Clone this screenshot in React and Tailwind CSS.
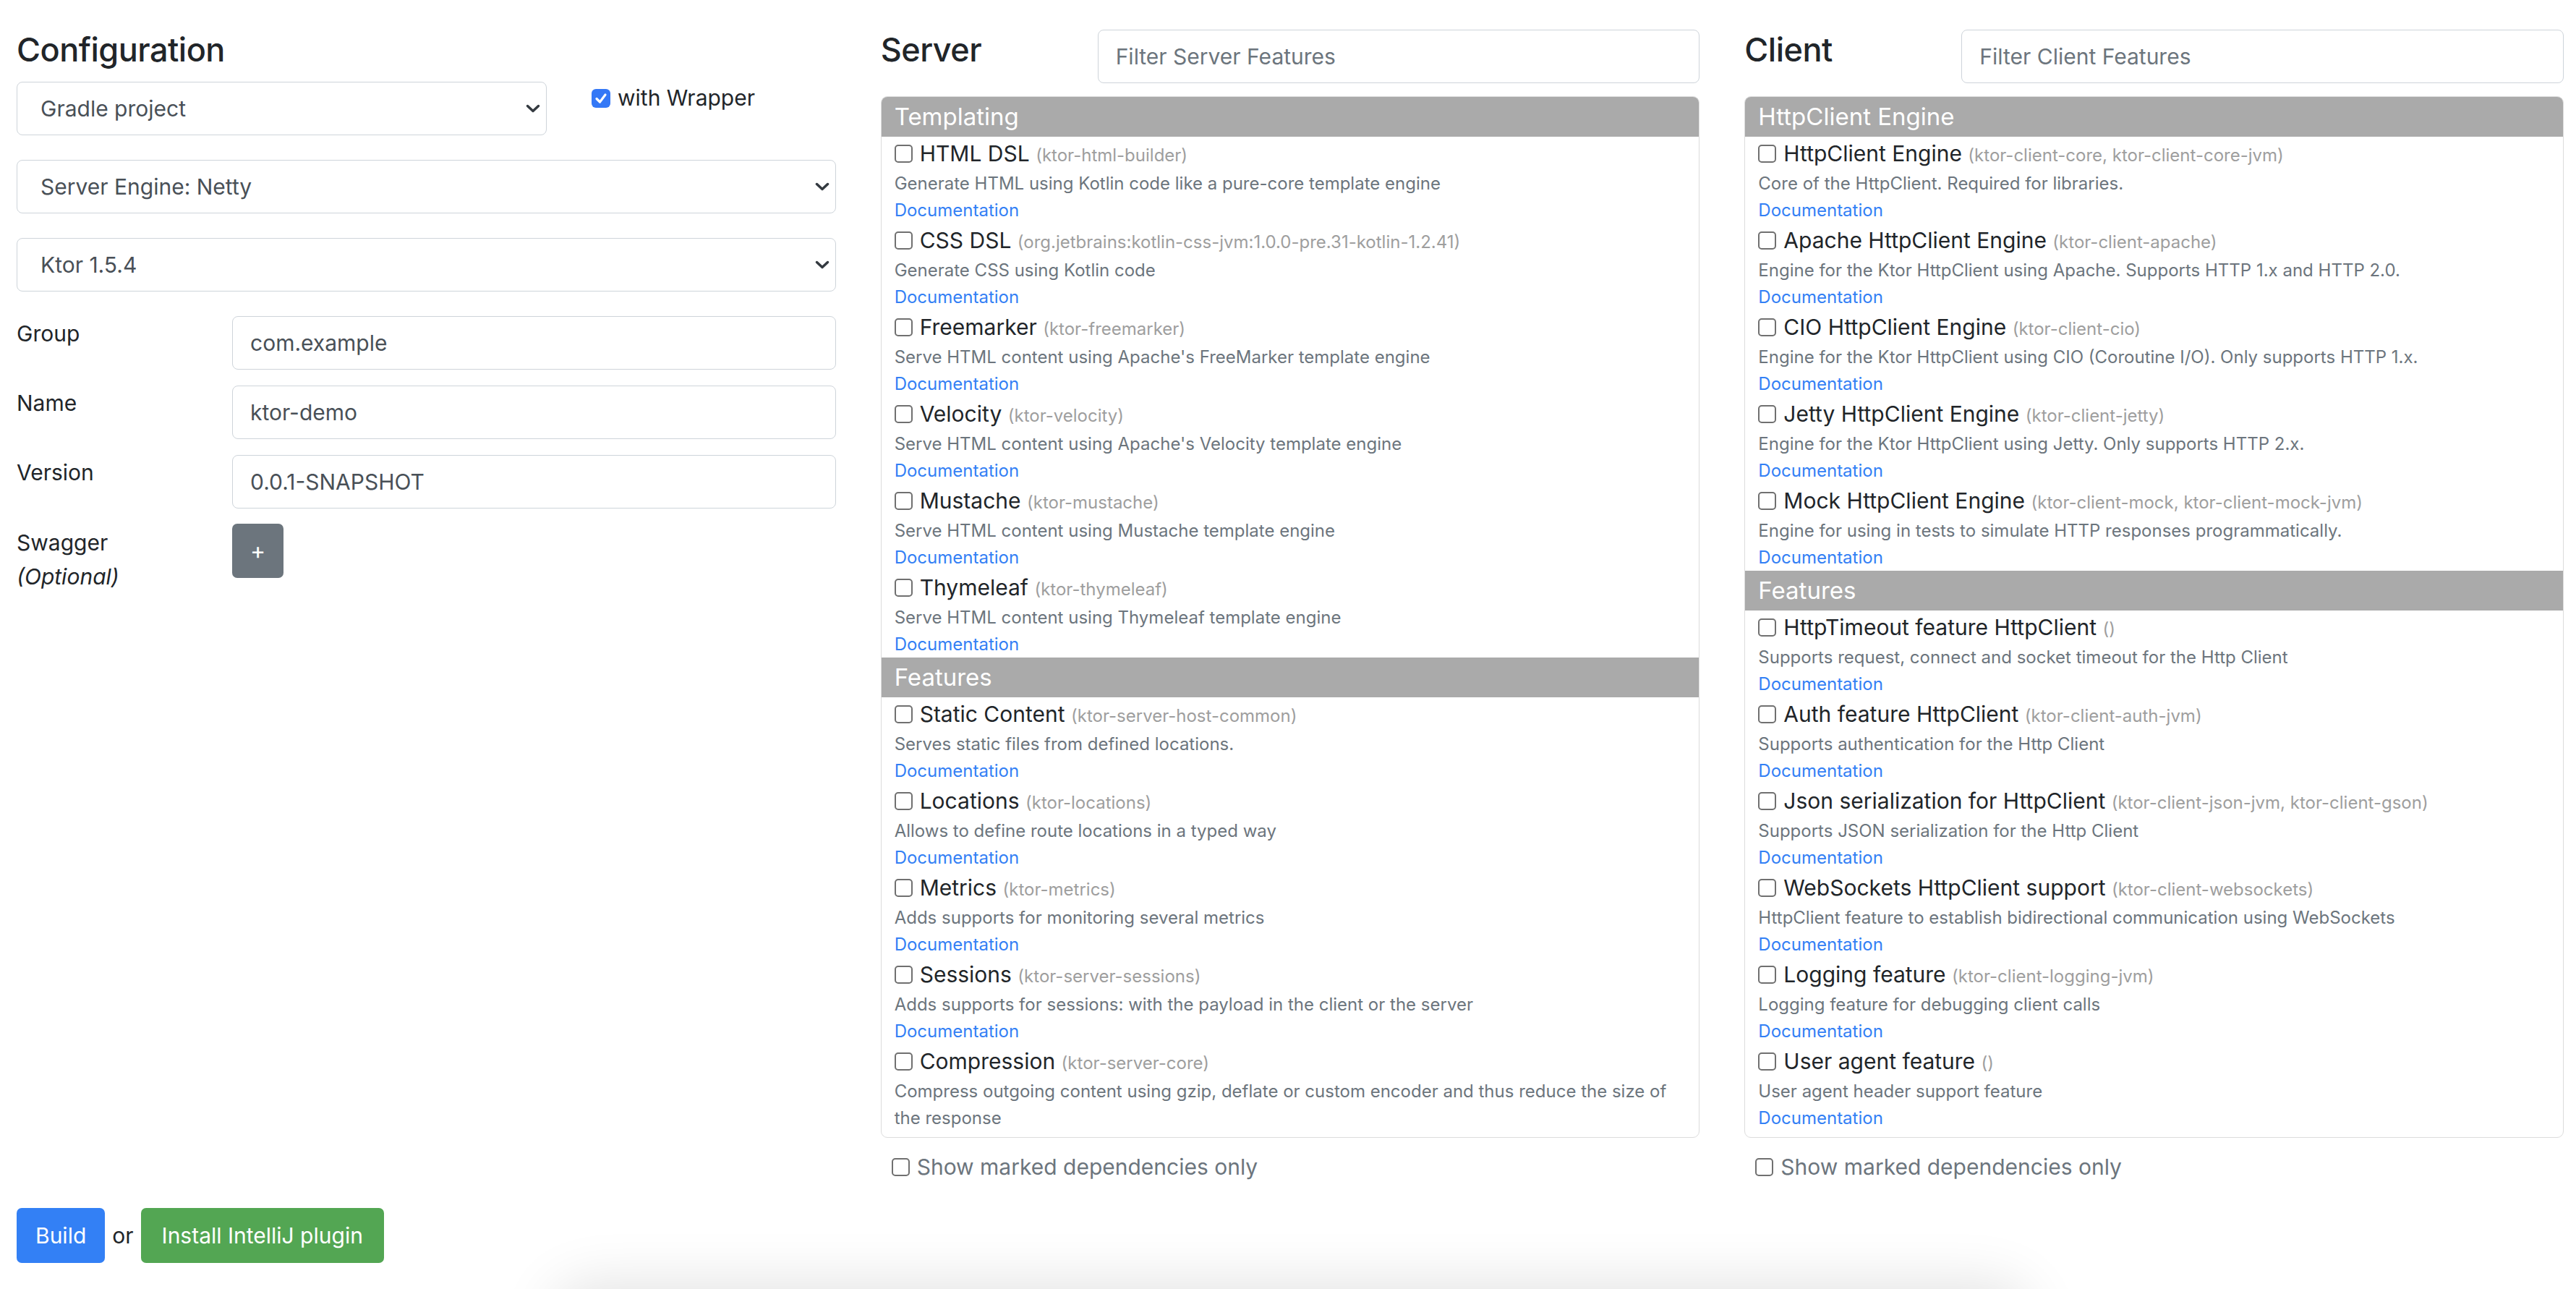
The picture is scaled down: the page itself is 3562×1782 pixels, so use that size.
import React from 'react'

const serverGroups = [
  {
    title: 'Templating',
    items: [
      { name: 'HTML DSL', dep: 'ktor-html-builder', desc: 'Generate HTML using Kotlin code like a pure-core template engine' },
      { name: 'CSS DSL', dep: 'org.jetbrains:kotlin-css-jvm:1.0.0-pre.31-kotlin-1.2.41', desc: 'Generate CSS using Kotlin code' },
      { name: 'Freemarker', dep: 'ktor-freemarker', desc: "Serve HTML content using Apache's FreeMarker template engine" },
      { name: 'Velocity', dep: 'ktor-velocity', desc: "Serve HTML content using Apache's Velocity template engine" },
      { name: 'Mustache', dep: 'ktor-mustache', desc: 'Serve HTML content using Mustache template engine' },
      { name: 'Thymeleaf', dep: 'ktor-thymeleaf', desc: 'Serve HTML content using Thymeleaf template engine' },
    ],
  },
  {
    title: 'Features',
    items: [
      { name: 'Static Content', dep: 'ktor-server-host-common', desc: 'Serves static files from defined locations.' },
      { name: 'Locations', dep: 'ktor-locations', desc: 'Allows to define route locations in a typed way' },
      { name: 'Metrics', dep: 'ktor-metrics', desc: 'Adds supports for monitoring several metrics' },
      { name: 'Sessions', dep: 'ktor-server-sessions', desc: 'Adds supports for sessions: with the payload in the client or the server' },
      { name: 'Compression', dep: 'ktor-server-core', desc: 'Compress outgoing content using gzip, deflate or custom encoder and thus reduce the size of the response' },
    ],
  },
]

const clientGroups = [
  {
    title: 'HttpClient Engine',
    items: [
      { name: 'HttpClient Engine', dep: 'ktor-client-core, ktor-client-core-jvm', desc: 'Core of the HttpClient. Required for libraries.' },
      { name: 'Apache HttpClient Engine', dep: 'ktor-client-apache', desc: 'Engine for the Ktor HttpClient using Apache. Supports HTTP 1.x and HTTP 2.0.' },
      { name: 'CIO HttpClient Engine', dep: 'ktor-client-cio', desc: 'Engine for the Ktor HttpClient using CIO (Coroutine I/O). Only supports HTTP 1.x.' },
      { name: 'Jetty HttpClient Engine', dep: 'ktor-client-jetty', desc: 'Engine for the Ktor HttpClient using Jetty. Only supports HTTP 2.x.' },
      { name: 'Mock HttpClient Engine', dep: 'ktor-client-mock, ktor-client-mock-jvm', desc: 'Engine for using in tests to simulate HTTP responses programmatically.' },
    ],
  },
  {
    title: 'Features',
    items: [
      { name: 'HttpTimeout feature HttpClient', dep: '', desc: 'Supports request, connect and socket timeout for the Http Client' },
      { name: 'Auth feature HttpClient', dep: 'ktor-client-auth-jvm', desc: 'Supports authentication for the Http Client' },
      { name: 'Json serialization for HttpClient', dep: 'ktor-client-json-jvm, ktor-client-gson', desc: 'Supports JSON serialization for the Http Client' },
      { name: 'WebSockets HttpClient support', dep: 'ktor-client-websockets', desc: 'HttpClient feature to establish bidirectional communication using WebSockets' },
      { name: 'Logging feature', dep: 'ktor-client-logging-jvm', desc: 'Logging feature for debugging client calls' },
      { name: 'User agent feature', dep: '', desc: 'User agent header support feature' },
    ],
  },
]

function Box() {
  return <span className="inline-block align-top mt-[11px] w-[25px] h-[25px] border-2 border-[#707070] rounded-[5px] bg-white" />
}

function Chevron() {
  return (
    <svg width="20" height="12" viewBox="0 0 20 12" className="shrink-0">
      <polyline points="2.5,2.5 10,9.5 17.5,2.5" fill="none" stroke="#343a40" strokeWidth="3.5" strokeLinecap="round" strokeLinejoin="round" />
    </svg>
  )
}

function Select({ value, className = '' }) {
  return (
    <div className={`flex items-center justify-between h-[74px] border border-[#ced4da] rounded-[8px] bg-white pl-[32px] pr-[8px] text-[30px] text-[#495057] ${className}`}>
      <span>{value}</span>
      <Chevron />
    </div>
  )
}

function Input({ value, placeholder, className = '' }) {
  return (
    <div className={`flex items-center h-[74px] border border-[#ced4da] rounded-[8px] bg-white pl-[24px] text-[30px] ${className}`}>
      {value ? <span className="text-[#495057]">{value}</span> : <span className="text-[#6c757d]">{placeholder}</span>}
    </div>
  )
}

function Item({ name, dep, desc }) {
  return (
    <div>
      <div className="h-[46px] leading-[46px] text-[30px] text-[#212529] whitespace-nowrap">
        <Box />
        <span className="ml-[10px]">{name}</span>{' '}
        <span className="text-[24px] leading-none text-[#9e9e9e]">({dep})</span>
      </div>
      <div className="leading-[37px] text-[24px] text-[#6c757d]">{desc}</div>
      <div className="leading-[37px] text-[24px] text-[#3380f5]">Documentation</div>
    </div>
  )
}

function FeaturePanel({ title, placeholder, groups }) {
  return (
    <div>
      <div className="flex items-start">
        <h3 className="w-[300px] text-[45px] leading-[56px] font-medium tracking-[-0.5px] text-[#212529]">{title}</h3>
        <Input placeholder={placeholder} className="flex-1" />
      </div>
      <div className="mt-[18px] h-[1440px] border border-[#dcdcdc] rounded-[9px] overflow-hidden">
        {groups.map((g) => (
          <div key={g.title}>
            <div className="h-[55px] bg-[#aaaaaa] px-[18px] text-[33px] leading-[55px] text-white">{g.title}</div>
            <div className="px-[18px]">
              {g.items.map((it) => (
                <Item key={it.name} {...it} />
              ))}
            </div>
          </div>
        ))}
      </div>
      <div className="mt-[17px] pl-[15px] h-[46px] leading-[46px] text-[30px] text-[#6c757d]">
        <Box />
        <span className="ml-[10px]">Show marked dependencies only</span>
      </div>
    </div>
  )
}

function FieldRow({ label, children }) {
  return (
    <div className="flex items-start">
      <div className="w-[298px] mt-[1px] text-[30px] leading-[46px] text-[#212529]">{label}</div>
      <div className="flex-1">{children}</div>
    </div>
  )
}

export default function App() {
  return (
    <div className="relative h-[1782px] overflow-hidden bg-white font-['Inter',sans-serif]">
      <div className="grid grid-cols-3 gap-x-[62px] pl-[23px] pr-[17px] pt-[41px]">
        {/* Configuration */}
        <div>
          <h3 className="text-[45px] leading-[56px] font-medium tracking-[-0.5px] text-[#212529]">Configuration</h3>
          <div className="mt-[16px] flex items-start">
            <Select value="Gradle project" className="w-[733px]" />
            <div className="ml-[62px] mt-[-1px] h-[46px] leading-[46px] text-[30px] text-[#212529] whitespace-nowrap">
              <span className="inline-flex align-top mt-[11px] w-[26px] h-[26px] rounded-[6px] bg-[#3478f6] items-center justify-center">
                <svg width="20" height="20" viewBox="0 0 20 20">
                  <polyline points="4,10.5 8.5,15 16,5" fill="none" stroke="white" strokeWidth="3.2" strokeLinecap="round" strokeLinejoin="round" />
                </svg>
              </span>
              <span className="ml-[10px]">with Wrapper</span>
            </div>
          </div>
          <Select value="Server Engine: Netty" className="mt-[34px]" />
          <Select value="Ktor 1.5.4" className="mt-[34px]" />
          <div className="mt-[34px] flex flex-col gap-[22px]">
            <FieldRow label="Group">
              <Input value="com.example" />
            </FieldRow>
            <FieldRow label="Name">
              <Input value="ktor-demo" />
            </FieldRow>
            <FieldRow label="Version">
              <Input value="0.0.1-SNAPSHOT" />
            </FieldRow>
          </div>
          <div className="mt-[21px] flex items-start">
            <div className="w-[298px] mt-[3px] text-[30px] leading-[47px] text-[#212529]">
              <div>Swagger</div>
              <div className="italic">(Optional)</div>
            </div>
            <button className="w-[71px] h-[75px] rounded-[7px] bg-[#6c757d] text-white text-[32px] leading-none">+</button>
          </div>
        </div>

        <FeaturePanel title="Server" placeholder="Filter Server Features" groups={serverGroups} />
        <FeaturePanel title="Client" placeholder="Filter Client Features" groups={clientGroups} />
      </div>

      <div className="mt-[34px] pl-[23px] flex items-center gap-[10px] text-[30px]">
        <button className="h-[76px] px-[26px] rounded-[7px] bg-[#3380f5] text-white">Build</button>
        <span className="text-[#212529]">or</span>
        <button className="h-[76px] px-[29px] rounded-[7px] bg-[#53a653] text-white">Install IntelliJ plugin</button>
      </div>

      {/* shadow of a bar sitting just below the viewport */}
      <div className="absolute left-[790px] top-[1800px] w-[1990px] h-[200px] rounded-[24px] bg-white shadow-[0_0_80px_24px_rgba(0,0,0,0.12)]" />
    </div>
  )
}
